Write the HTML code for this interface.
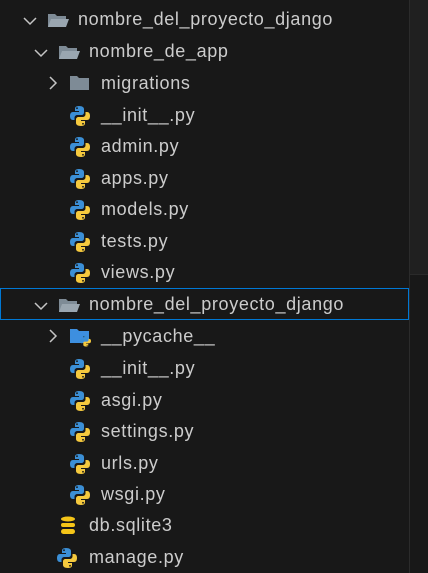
<!DOCTYPE html><html><head><style>
body{margin:0;width:428px;height:573px;background:#181818;overflow:hidden;position:relative;font-family:"Liberation Sans",sans-serif;font-size:18px;letter-spacing:0.65px;color:#cccccc}
.r{position:absolute;left:0;height:31px;width:409px}
.r span{position:absolute;top:5px;line-height:21px}
.r svg{position:absolute}
.sb{position:absolute;left:409px;top:0;width:1px;height:573px;background:#2b2b2b}
.th{position:absolute;left:410px;top:0;width:18px;height:274px;background:#202020;border-bottom:1px solid #2a2a2a}
.sel{position:absolute;left:0;top:288px;width:407px;height:30px;border:1px solid #0078d4}
</style></head><body>
<svg width="0" height="0" style="position:absolute"><defs>
<g id="py"><path d="M9 1C5 1 5 3 5 4v2h4v1H3C1 7 0 8.5 0 11s1 4 3 4h1.5v-2.2C4.5 11 6 10 7.5 10h4c1.3 0 2.5-1 2.5-2.5V4c0-1.5-1.5-3-5-3z" fill="#3b8fd6"/><circle cx="7" cy="3.2" r=".9" fill="#181818"/><path d="M11 21c4 0 4-2 4-3v-2h-4v-1h6c2 0 3-1.5 3-4s-1-4-3-4h-1.5v2.2c0 1.8-1.5 2.8-3 2.8h-4C7.2 12 6 13 6 14.5V18c0 1.5 1.5 3 5 3z" fill="#f5c93e"/><circle cx="13" cy="18.8" r=".9" fill="#181818"/></g>
<g id="fo"><path d="M0 3h7l2 2h9v11H0z" fill="#7e8b96"/><path d="M0 16L3 8h18l-3 8z" fill="#9aa6b0"/></g>
<g id="fc"><path d="M0 2h7l2 2h10v12H0z" fill="#7e8b96"/></g>
<g id="cd"><path d="M1 4l6 6 6-6" fill="none" stroke="#c5c5c5" stroke-width="1.5"/></g>
<g id="cr"><path d="M4 1l6 6-6 6" fill="none" stroke="#c5c5c5" stroke-width="1.5"/></g>
</defs></svg>
<div class="sb"></div><div class="th"></div><div class="sel"></div>

<div class="r" style="top:4px"><svg style="left:23px;top:10px" width="14" height="14"><use href="#cd"/></svg><svg style="left:48px;top:7px" width="22" height="18"><use href="#fo"/></svg><span style="left:78px">nombre_del_proyecto_django</span></div>
<div class="r" style="top:36px"><svg style="left:34px;top:10px" width="14" height="14"><use href="#cd"/></svg><svg style="left:59px;top:7px" width="22" height="18"><use href="#fo"/></svg><span style="left:89px">nombre_de_app</span></div>
<div class="r" style="top:68px"><svg style="left:46px;top:8px" width="14" height="14"><use href="#cr"/></svg><svg style="left:70px;top:6px" width="22" height="18"><use href="#fc"/></svg><span style="left:101px">migrations</span></div>
<div class="r" style="top:100px"><svg style="left:70px;top:5px" width="22" height="22"><use href="#py"/></svg><span style="left:101px">__init__.py</span></div>
<div class="r" style="top:131px"><svg style="left:70px;top:5px" width="22" height="22"><use href="#py"/></svg><span style="left:101px">admin.py</span></div>
<div class="r" style="top:163px"><svg style="left:70px;top:5px" width="22" height="22"><use href="#py"/></svg><span style="left:101px">apps.py</span></div>
<div class="r" style="top:194px"><svg style="left:70px;top:5px" width="22" height="22"><use href="#py"/></svg><span style="left:101px">models.py</span></div>
<div class="r" style="top:226px"><svg style="left:70px;top:5px" width="22" height="22"><use href="#py"/></svg><span style="left:101px">tests.py</span></div>
<div class="r" style="top:257px"><svg style="left:70px;top:5px" width="22" height="22"><use href="#py"/></svg><span style="left:101px">views.py</span></div>
<div class="r" style="top:289px"><svg style="left:34px;top:10px" width="14" height="14"><use href="#cd"/></svg><svg style="left:59px;top:7px" width="22" height="18"><use href="#fo"/></svg><span style="left:89px">nombre_del_proyecto_django</span></div>
<div class="r" style="top:321px"><svg style="left:46px;top:8px" width="14" height="14"><use href="#cr"/></svg><svg style="left:70px;top:6px" width="22" height="20"><path d="M0 2h7l2 2h10v12H0z" fill="#3d8fe0"/><g transform="translate(10 8) scale(.55)"><use href="#py"/></g></svg><span style="left:101px">__pycache__</span></div>
<div class="r" style="top:353px"><svg style="left:70px;top:5px" width="22" height="22"><use href="#py"/></svg><span style="left:101px">__init__.py</span></div>
<div class="r" style="top:385px"><svg style="left:70px;top:5px" width="22" height="22"><use href="#py"/></svg><span style="left:101px">asgi.py</span></div>
<div class="r" style="top:416px"><svg style="left:70px;top:5px" width="22" height="22"><use href="#py"/></svg><span style="left:101px">settings.py</span></div>
<div class="r" style="top:448px"><svg style="left:70px;top:5px" width="22" height="22"><use href="#py"/></svg><span style="left:101px">urls.py</span></div>
<div class="r" style="top:479px"><svg style="left:70px;top:5px" width="22" height="22"><use href="#py"/></svg><span style="left:101px">wsgi.py</span></div>
<div class="r" style="top:510px"><svg style="left:60px;top:6px" width="16" height="20"><ellipse cx="8" cy="3" rx="7" ry="2.5" fill="#f5c518"/><rect x="1" y="7" width="14" height="4" rx="2" fill="#f5c518"/><rect x="1" y="13" width="14" height="5" rx="2.5" fill="#f5c518"/></svg><span style="left:89px">db.sqlite3</span></div>
<div class="r" style="top:542px"><svg style="left:57px;top:5px" width="22" height="22"><use href="#py"/></svg><span style="left:89px">manage.py</span></div>
</body></html>
